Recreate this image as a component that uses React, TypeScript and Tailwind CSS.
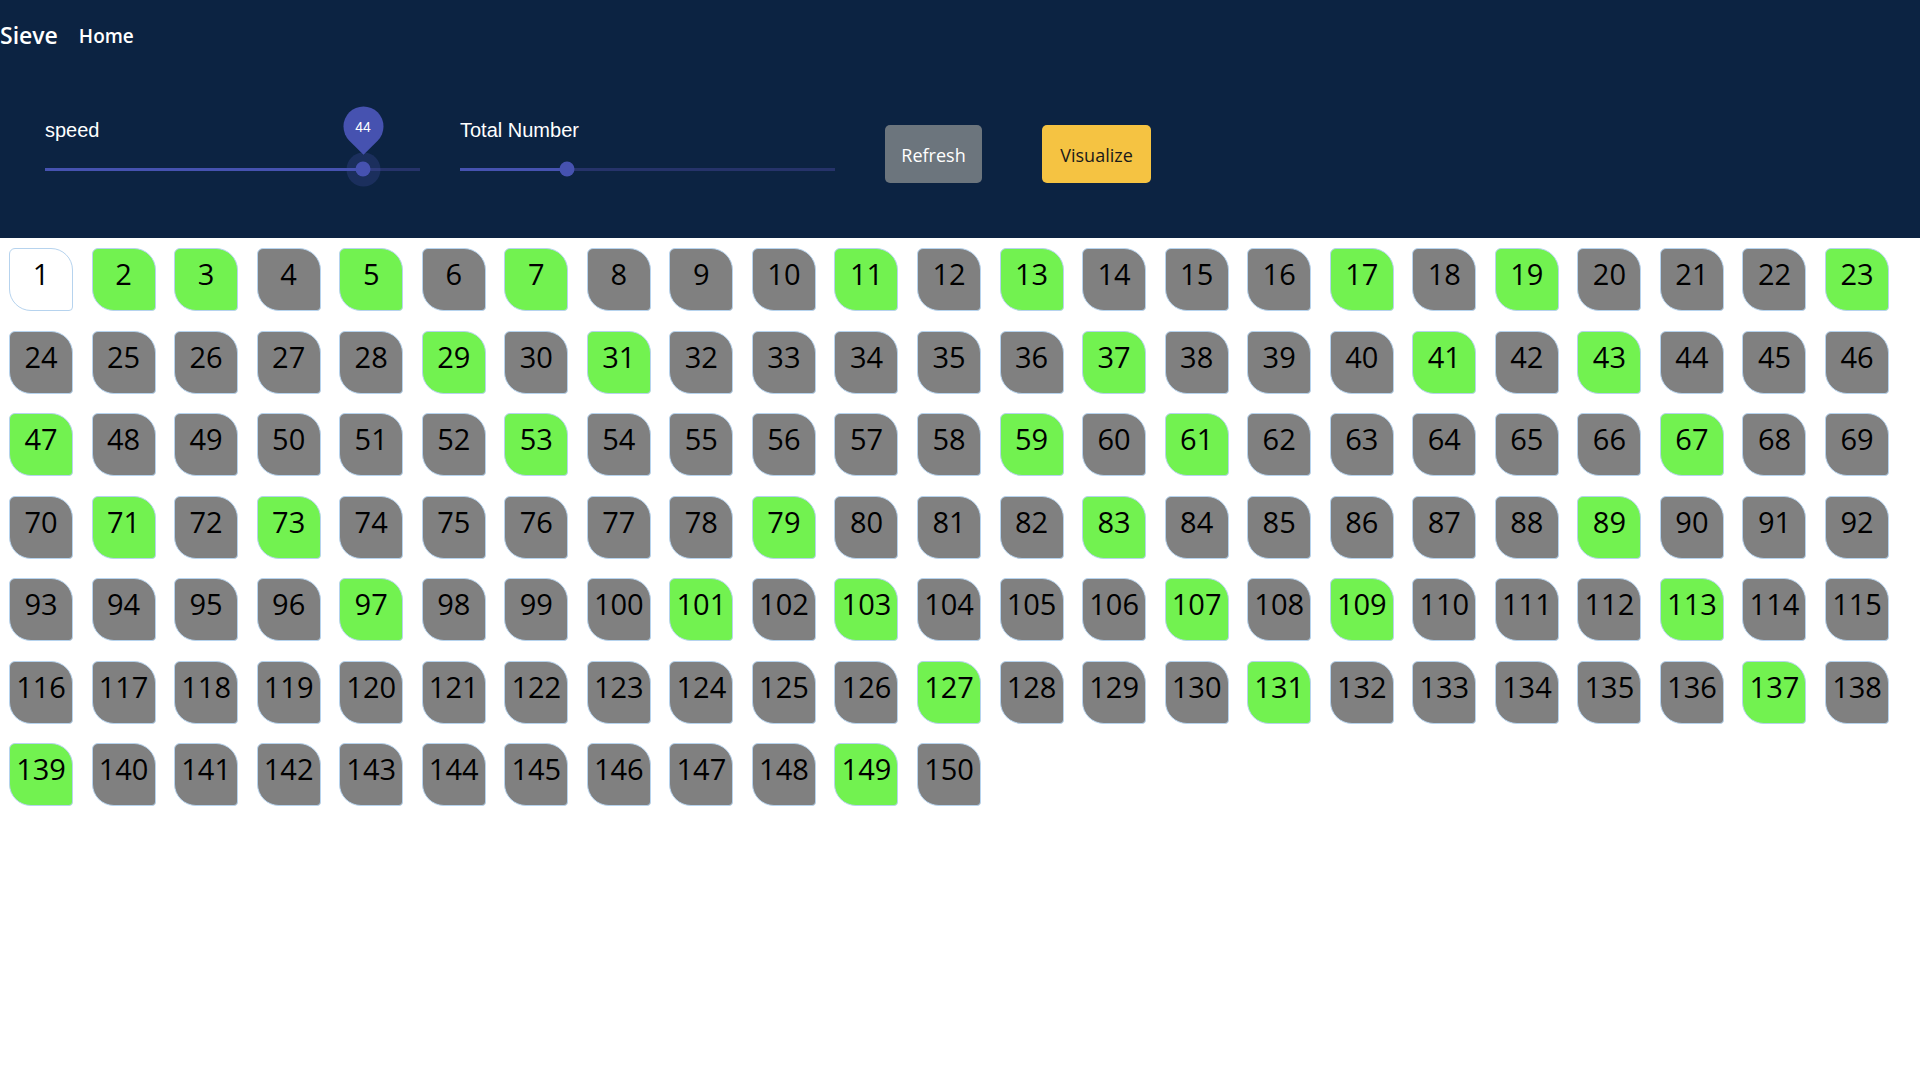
import React from 'react'

const TOTAL = 150

function isPrime(n: number) {
  if (n < 2) return false
  for (let i = 2; i * i <= n; i++) {
    if (n % i === 0) return false
  }
  return true
}

function Slider({ label, pct, value, active }: { label: string; pct: number; value?: number; active?: boolean }) {
  return (
    <div className="w-[375px] flex flex-col">
      <div className="text-[20px] leading-[22px] text-white font-['Liberation_Sans',Arial,sans-serif]">{label}</div>
      <div className="relative mt-[13px] h-[30px]">
        <div className="absolute left-0 right-0 top-[14px] h-[3px] bg-[#26336a]" />
        <div className="absolute left-0 top-[14px] h-[3px] bg-[#4652b0]" style={{ width: `${pct}%` }} />
        <div className="absolute top-[15px] -translate-x-1/2 -translate-y-1/2" style={{ left: `${pct}%` }}>
          <div className="relative flex items-center justify-center">
            {active && <div className="absolute w-[34px] h-[34px] rounded-full bg-[#4652b0]/25" />}
            <div className="relative w-[15px] h-[15px] rounded-full bg-[#4652b0]" />
            {active && (
              <div className="absolute left-1/2 -translate-x-1/2 top-[-55px] w-[40px] h-[40px] flex items-center justify-center">
                <div className="absolute inset-0 bg-[#4652b0] rounded-[50%_50%_50%_0] -rotate-45" />
                <span className="relative text-[14px] text-white font-['Liberation_Sans',Arial,sans-serif]">{value}</span>
              </div>
            )}
          </div>
        </div>
      </div>
    </div>
  )
}

function Cell({ n }: { n: number }) {
  const bg = n === 1 ? 'bg-white' : isPrime(n) ? 'bg-[#72f250]' : 'bg-[#808080]'
  return (
    <div className={`${bg} w-[64px] h-[63px] border border-[#b6d3ee] rounded-[6px_22px_4px_22px] flex justify-center pt-[5px] text-[29px] leading-[40px] text-black font-['Open_Sans',sans-serif]`}>
      {n}
    </div>
  )
}

export default function App() {
  const nums = Array.from({ length: TOTAL }, (_, i) => i + 1)

  return (
    <div className="min-h-screen bg-white">
      <div className="bg-[#0c2342] h-[238px]">
        <nav className="h-[72px] flex items-center font-['Open_Sans',sans-serif] text-white">
          <span className="text-[23px] font-semibold pb-[1px]">Sieve</span>
          <span className="ml-[21px] text-[19px] font-semibold">Home</span>
        </nav>
        <div className="flex items-start pl-[45px] mt-[47px]">
          <Slider label="speed" pct={84.8} value={44} active />
          <div className="ml-[40px]">
            <Slider label="Total Number" pct={28.5} />
          </div>
          <button className="ml-[50px] mt-[6px] h-[58px] w-[97px] rounded-[5px] bg-[#6c757d] text-white text-[18px] pt-[2px] font-['Open_Sans',sans-serif]">
            Refresh
          </button>
          <button className="ml-[60px] mt-[6px] h-[58px] w-[109px] rounded-[5px] bg-[#f5c342] text-[#1a1a1a] text-[18px] pt-[2px] font-['Open_Sans',sans-serif]">
            Visualize
          </button>
        </div>
      </div>

      <div className="grid grid-cols-[repeat(23,64px)] gap-x-[18.55px] gap-y-[19.5px] pl-[9px] pt-[10px]">
        {nums.map((n) => (
          <Cell key={n} n={n} />
        ))}
      </div>
    </div>
  )
}
